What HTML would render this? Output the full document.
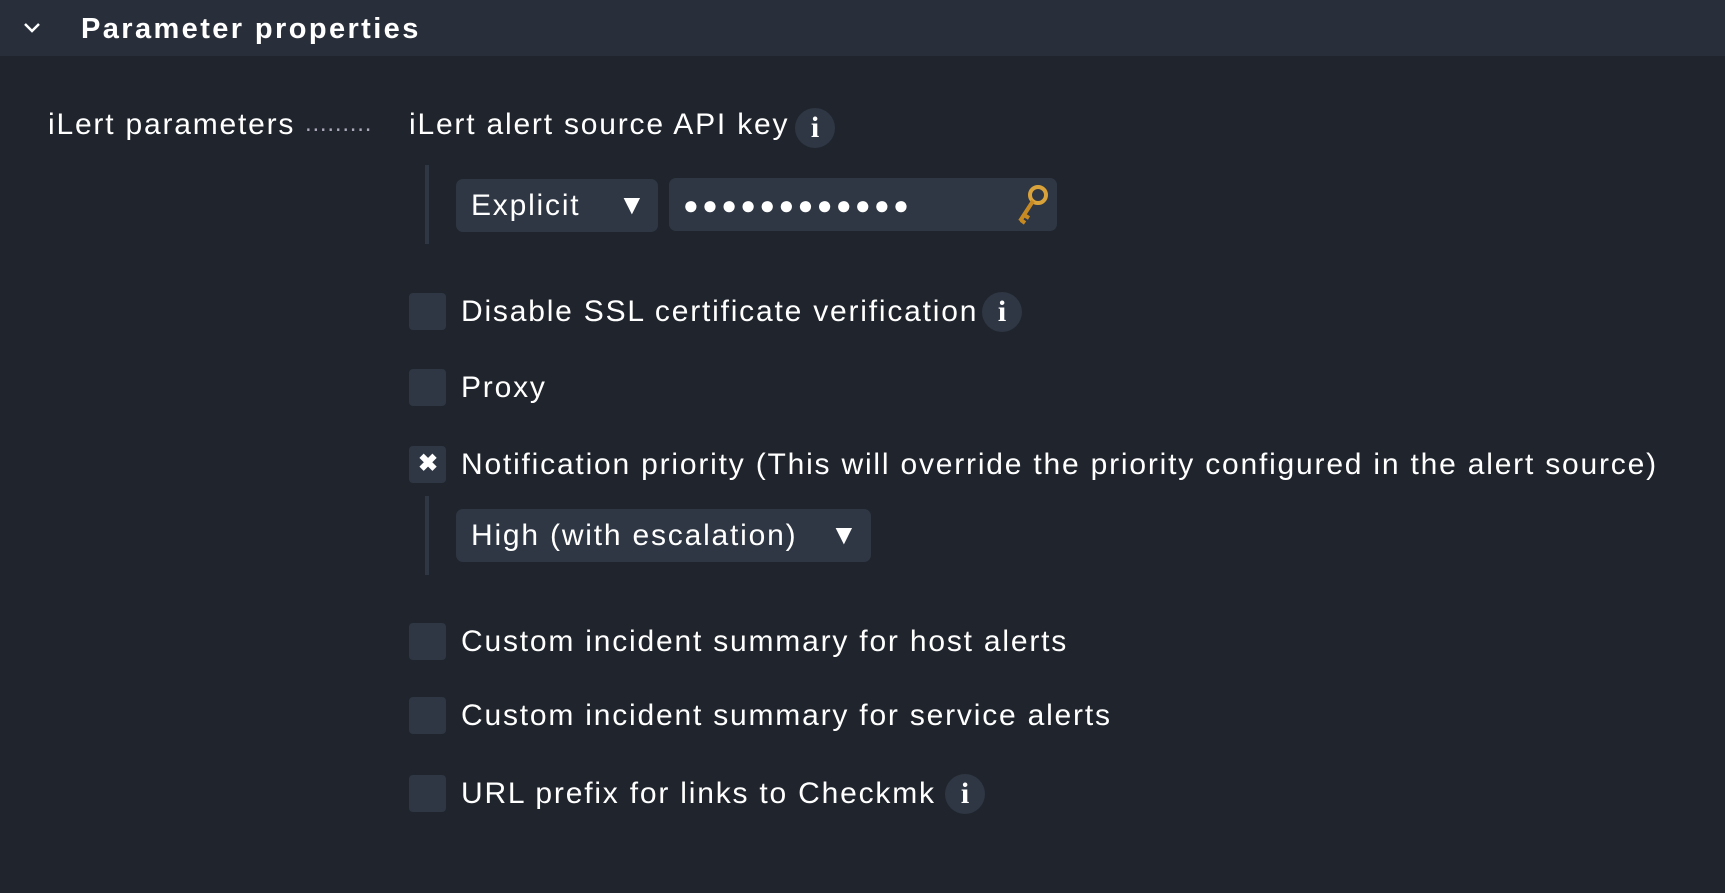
<!DOCTYPE html>
<html><head><style>
body{margin:0;width:1725px;height:893px;background:#20252d;font-family:"Liberation Sans",sans-serif;color:#fff;position:relative;overflow:hidden}
.hdr{position:absolute;left:0;top:0;width:1725px;height:56px;background:#292f3a}
.t{position:absolute;font-size:30px;letter-spacing:1.8px;white-space:nowrap;line-height:32px}
.cb{position:absolute;left:409px;width:37px;height:37px;background:#2f3744;border-radius:4px}
.info{position:absolute;width:40px;height:40px;border-radius:50%;background:#2f3744;color:#fff;font-family:"Liberation Serif",serif;font-weight:bold;font-size:30px;text-align:center;line-height:40px}
.vl{position:absolute;left:425px;width:4px;background:#2f3744}
.dd{position:absolute;background:#2f3744;border-radius:7px}
</style></head><body>
<div class="hdr"></div>
<svg style="position:absolute;left:22px;top:21px" width="20" height="14"><path d="M3 3 L10 10 L17 3" stroke="#fff" stroke-width="2.5" fill="none"/></svg>
<div class="t" style="left:81px;top:13px;font-weight:bold;font-size:29px;letter-spacing:2.4px">Parameter properties</div>

<div class="t" style="left:48px;top:109px">iLert parameters</div>
<div class="t" style="left:305px;top:108px;color:#aab;letter-spacing:0.8px;font-size:24px">.........</div>
<div class="t" style="left:409px;top:109px">iLert alert source API key</div>
<div class="info" style="left:795px;top:108px">i</div>

<div class="vl" style="top:165px;height:79px"></div>
<div class="dd" style="left:456px;top:179px;width:202px;height:53px"></div>
<div class="t" style="left:471px;top:190px">Explicit</div>
<div class="t" style="left:618px;top:189px;letter-spacing:0;font-size:28px">▼</div>
<div class="dd" style="left:669px;top:178px;width:388px;height:53px"></div>
<div class="t" style="left:683px;top:189px;letter-spacing:3.4px;font-size:26px">●●●●●●●●●●●●</div>
<svg style="position:absolute;left:1014px;top:183px" width="36" height="44" viewBox="0 0 36 44"><circle cx="24" cy="12" r="8" fill="none" stroke="#d9a23a" stroke-width="4"/><path d="M19 18 L6 38 M10 32 L15 35 M7 37 L11 40" stroke="#c78a22" stroke-width="4" fill="none"/></svg>

<div class="cb" style="top:293px"></div>
<div class="t" style="left:461px;top:296px">Disable SSL certificate verification</div>
<div class="info" style="left:982px;top:292px">i</div>

<div class="cb" style="top:369px"></div>
<div class="t" style="left:461px;top:372px">Proxy</div>

<div class="cb" style="top:446px"></div>
<div class="t" style="left:418px;top:448px;font-weight:bold;font-size:24px;letter-spacing:0">✖</div>
<div class="t" style="left:461px;top:449px">Notification priority (This will override the priority configured in the alert source)</div>

<div class="vl" style="top:496px;height:79px"></div>
<div class="dd" style="left:456px;top:509px;width:415px;height:53px"></div>
<div class="t" style="left:471px;top:520px">High (with escalation)</div>
<div class="t" style="left:830px;top:519px;letter-spacing:0;font-size:28px">▼</div>

<div class="cb" style="top:623px"></div>
<div class="t" style="left:461px;top:626px">Custom incident summary for host alerts</div>

<div class="cb" style="top:697px"></div>
<div class="t" style="left:461px;top:700px">Custom incident summary for service alerts</div>

<div class="cb" style="top:775px"></div>
<div class="t" style="left:461px;top:778px">URL prefix for links to Checkmk</div>
<div class="info" style="left:945px;top:774px">i</div>
</body></html>
